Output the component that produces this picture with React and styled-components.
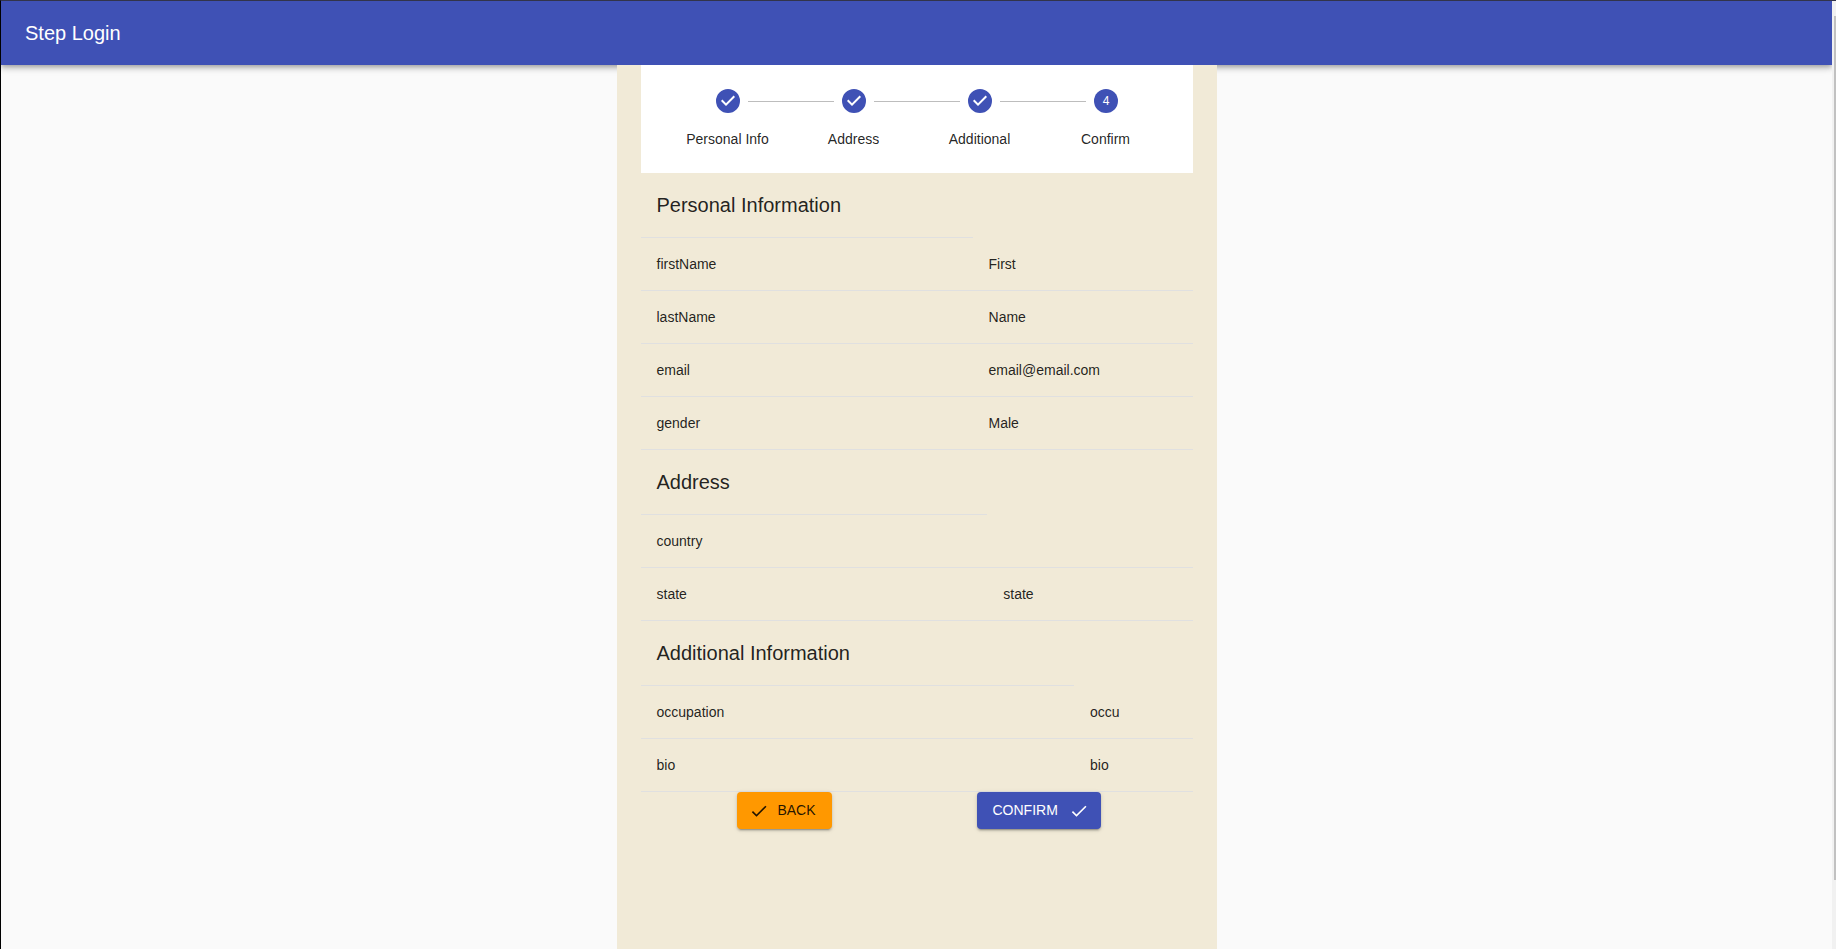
import React from 'react';
import styled, { createGlobalStyle, css } from 'styled-components';

const primary = '#3f51b5';
const text = 'rgba(0, 0, 0, 0.87)';

const GlobalStyle = createGlobalStyle`
  *, *::before, *::after { box-sizing: border-box; }
  body {
    margin: 0;
    background: #fafafa;
    color: ${text};
    font-family: "Liberation Sans", Arial, sans-serif;
    font-size: 14px;
    line-height: 20px;
  }
`;

const Frame = styled.div`
  display: flex;
  height: 100vh;
  border-top: 1px solid #32344a;
  border-left: 1px solid #000;
`;

const Viewport = styled.div`
  flex: 1;
  overflow-y: auto;
  scrollbar-width: none;
`;

const ScrollTrack = styled.div`
  flex: none;
  width: 4px;
  padding: 15px 0 69px 2px;
  background: #f1f1f1;
`;

const ScrollThumb = styled.div`
  height: 100%;
  background: #c1c1c1;
`;

const AppBar = styled.header`
  display: flex;
  align-items: center;
  height: 64px;
  padding: 0 24px;
  background: ${primary};
  color: #fff;
  box-shadow: 0 2px 4px -1px rgba(0, 0, 0, 0.2), 0 4px 5px 0 rgba(0, 0, 0, 0.14),
    0 1px 10px 0 rgba(0, 0, 0, 0.12);
`;

const AppTitle = styled.h1`
  margin: 0;
  font-size: 20px;
  font-weight: 400;
  line-height: 32px;
`;

const Container = styled.main`
  position: relative;
  max-width: 600px;
  min-height: 100vh;
  margin: 0 auto;
  padding: 0 24px;
  background: #f1ead7;
`;

const Stepper = styled.ol`
  display: flex;
  margin: 0;
  padding: 24px;
  list-style: none;
  background: #fff;
`;

const Step = styled.li`
  flex: 1;
  text-align: center;
`;

const StepMarker = styled.div`
  display: flex;
  align-items: center;
  gap: 8px;
  margin-bottom: 16px;
`;

const Connector = styled.span`
  flex: 1;
  height: 1px;
  background: ${(p) => (p.$hidden ? 'transparent' : '#bdbdbd')};
`;

const StepSvg = styled.svg`
  display: block;
  width: 24px;
  height: 24px;
  fill: ${primary};
`;

const StepNumber = styled.text`
  fill: #fff;
  font-size: 12px;
  text-anchor: middle;
`;

const Table = styled.table`
  width: 100%;
  border-collapse: collapse;
`;

const cell = css`
  padding: 16px;
  border-bottom: 1px solid #e0e0e0;
  font-weight: 400;
  text-align: left;
`;

const HeadCell = styled.th`
  ${cell}
  font-size: 20px;
  line-height: 32px;
`;

const LabelCell = styled.th`
  ${cell}
`;

const ValueCell = styled.td`
  ${cell}
`;

const Actions = styled.div`
  display: flex;
  justify-content: space-between;
  padding: 0 92px 0 96px;
`;

const Button = styled.button`
  display: inline-flex;
  align-items: center;
  justify-content: space-between;
  gap: 8px;
  min-width: ${(p) => (p.$primary ? '124px' : '95px')};
  padding: ${(p) => (p.$primary ? '6px 12px 6px 16px' : '6px 16px 6px 12px')};
  border: 0;
  border-radius: 4px;
  background: ${(p) => (p.$primary ? primary : '#ff9800')};
  color: ${(p) => (p.$primary ? '#fff' : text)};
  font-family: inherit;
  font-size: 14px;
  line-height: 25px;
  text-transform: uppercase;
  cursor: pointer;
  box-shadow: 0 3px 1px -2px rgba(0, 0, 0, 0.2), 0 2px 2px 0 rgba(0, 0, 0, 0.14),
    0 1px 5px 0 rgba(0, 0, 0, 0.12);
`;

const ButtonSvg = styled.svg`
  width: 20px;
  height: 20px;
  fill: currentColor;
`;

const DoneIcon = () => (
  <ButtonSvg viewBox="0 0 24 24" aria-hidden="true">
    <path d="M9 16.2L4.8 12l-1.4 1.4L9 19 21 7l-1.4-1.4L9 16.2z" />
  </ButtonSvg>
);

const StepIcon = ({ done, number }) => (
  <StepSvg viewBox="0 0 24 24">
    {done ? (
      <path d="M12 0a12 12 0 1 0 0 24 12 12 0 0 0 0-24zm-2 17l-5-5 1.4-1.4 3.6 3.6 7.6-7.6L19 8l-9 9z" />
    ) : (
      <>
        <circle cx="12" cy="12" r="12" />
        <StepNumber x="12" y="16">{number}</StepNumber>
      </>
    )}
  </StepSvg>
);

const steps = ['Personal Info', 'Address', 'Additional', 'Confirm'];
const activeStep = 3;

const sections = [
  {
    title: 'Personal Information',
    rows: [
      ['firstName', 'First'],
      ['lastName', 'Name'],
      ['email', 'email@email.com'],
      ['gender', 'Male'],
    ],
  },
  { title: 'Address', rows: [['country', ''], ['state', 'state']] },
  { title: 'Additional Information', rows: [['occupation', 'occu'], ['bio', 'bio']] },
];

const Section = ({ title, rows }) => (
  <Table>
    <thead>
      <tr>
        <HeadCell scope="col">{title}</HeadCell>
      </tr>
    </thead>
    <tbody>
      {rows.map(([label, value]) => (
        <tr key={label}>
          <LabelCell scope="row">{label}</LabelCell>
          <ValueCell>{value}</ValueCell>
        </tr>
      ))}
    </tbody>
  </Table>
);

export default function App() {
  return (
    <>
      <GlobalStyle />
      <Frame>
        <Viewport>
          <AppBar>
            <AppTitle>Step Login</AppTitle>
          </AppBar>
          <Container>
            <Stepper>
              {steps.map((label, i) => (
                <Step key={label}>
                  <StepMarker>
                    <Connector $hidden={i === 0} />
                    <StepIcon done={i < activeStep} number={i + 1} />
                    <Connector $hidden={i === steps.length - 1} />
                  </StepMarker>
                  {label}
                </Step>
              ))}
            </Stepper>
            {sections.map((s) => (
              <Section key={s.title} {...s} />
            ))}
            <Actions>
              <Button type="button">
                <DoneIcon />
                Back
              </Button>
              <Button type="button" $primary>
                Confirm
                <DoneIcon />
              </Button>
            </Actions>
          </Container>
        </Viewport>
        <ScrollTrack>
          <ScrollThumb />
        </ScrollTrack>
      </Frame>
    </>
  );
}
